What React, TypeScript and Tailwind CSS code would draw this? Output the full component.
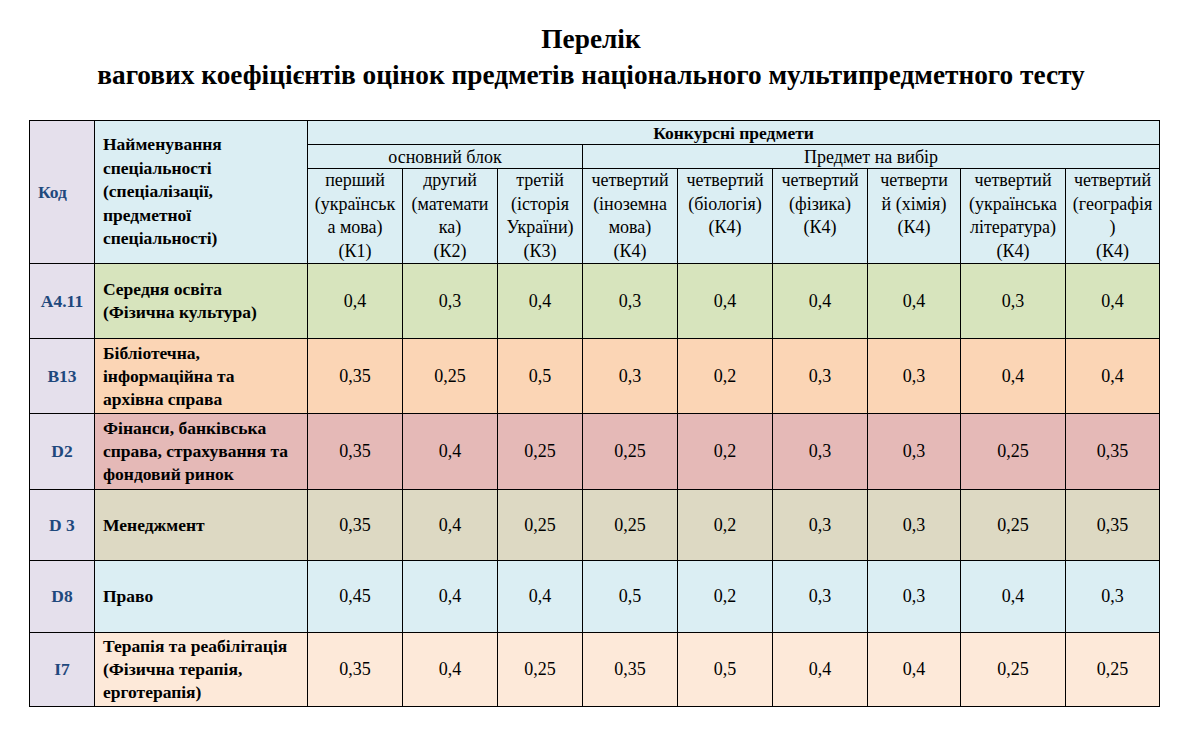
import React from "react";

type Row = {
  code: string;
  name: string[];
  values: string[];
  bg: string;
  h: string;
};

const rows: Row[] = [
  {
    code: "A4.11",
    name: ["Середня освіта", "(Фізична культура)"],
    values: ["0,4", "0,3", "0,4", "0,3", "0,4", "0,4", "0,4", "0,3", "0,4"],
    bg: "bg-[#d7e4bd]",
    h: "h-[75px]",
  },
  {
    code: "B13",
    name: ["Бібліотечна,", "інформаційна та", "архівна справа"],
    values: ["0,35", "0,25", "0,5", "0,3", "0,2", "0,3", "0,3", "0,4", "0,4"],
    bg: "bg-[#fbd5b5]",
    h: "h-[75px]",
  },
  {
    code: "D2",
    name: ["Фінанси, банківська", "справа, страхування та", "фондовий ринок"],
    values: ["0,35", "0,4", "0,25", "0,25", "0,2", "0,3", "0,3", "0,25", "0,35"],
    bg: "bg-[#e5b9b7]",
    h: "h-[76px]",
  },
  {
    code: "D 3",
    name: ["Менеджмент"],
    values: ["0,35", "0,4", "0,25", "0,25", "0,2", "0,3", "0,3", "0,25", "0,35"],
    bg: "bg-[#ddd9c3]",
    h: "h-[71px]",
  },
  {
    code: "D8",
    name: ["Право"],
    values: ["0,45", "0,4", "0,4", "0,5", "0,2", "0,3", "0,3", "0,4", "0,3"],
    bg: "bg-[#dbeef3]",
    h: "h-[72px]",
  },
  {
    code: "I7",
    name: ["Терапія та реабілітація", "(Фізична терапія,", "ерготерапія)"],
    values: ["0,35", "0,4", "0,25", "0,35", "0,5", "0,4", "0,4", "0,25", "0,25"],
    bg: "bg-[#fde9d9]",
    h: "h-[74px]",
  },
];

const subjects: string[][] = [
  ["перший", "(українськ", "а мова)", "(К1)"],
  ["другий", "(математи", "ка)", "(К2)"],
  ["третій", "(історія", "України)", "(К3)"],
  ["четвертий", "(іноземна", "мова)", "(К4)"],
  ["четвертий", "(біологія)", "(К4)"],
  ["четвертий", "(фізика)", "(К4)"],
  ["четверти", "й (хімія)", "(К4)"],
  ["четвертий", "(українська", "література)", "(К4)"],
  ["четвертий", "(географія", ")", "(К4)"],
];

const colWidths = [
  "w-[65px]",
  "w-[213px]",
  "w-[95px]",
  "w-[95px]",
  "w-[85px]",
  "w-[95px]",
  "w-[95px]",
  "w-[95px]",
  "w-[93px]",
  "w-[105px]",
  "w-[94px]",
];

const App: React.FC = () => {
  return (
    <div className="h-[739px] w-full bg-white font-['Liberation_Serif',serif] text-black">
      <div className="pt-[21px] text-center text-[27.3px] font-bold leading-[36px]">
        <p>Перелік</p>
        <p>вагових коефіцієнтів оцінок предметів національного мультипредметного тесту</p>
      </div>

      <table className="ml-[29px] mt-[27px] w-[1130px] table-fixed border-collapse border border-black text-[18px] leading-[23px]">
        <colgroup>
          {colWidths.map((w, i) => (
            <col key={i} className={w} />
          ))}
        </colgroup>
        <thead>
          <tr className="h-[24px]">
            <th
              rowSpan={3}
              className="border border-black bg-[#e5e0ec] pl-[8px] text-left text-[17.5px] font-bold text-[#1f497d]"
            >
              Код
            </th>
            <th
              rowSpan={3}
              className="border border-black bg-[#dbeef3] px-[8px] text-left text-[17.5px] font-bold leading-[23.5px]"
            >
              {["Найменування", "спеціальності", "(спеціалізації,", "предметної", "спеціальності)"].map((l, j) => (
                <div key={j} className="whitespace-nowrap">
                  {l}
                </div>
              ))}
            </th>
            <th colSpan={9} className="border border-black bg-[#dbeef3] text-[17.5px] font-bold leading-[22px]">
              Конкурсні предмети
            </th>
          </tr>
          <tr className="h-[24px]">
            <th colSpan={3} className="border border-black bg-[#dbeef3] font-normal leading-[22px]">
              основний блок
            </th>
            <th colSpan={6} className="border border-black bg-[#dbeef3] font-normal leading-[22px]">
              Предмет на вибір
            </th>
          </tr>
          <tr className="h-[94px]">
            {subjects.map((lines, i) => (
              <th
                key={i}
                className="border border-black bg-[#dbeef3] px-0 py-0 align-top font-normal leading-[23.5px]"
              >
                {lines.map((l, j) => (
                  <div key={j} className="whitespace-nowrap">
                    {l}
                  </div>
                ))}
              </th>
            ))}
          </tr>
        </thead>
        <tbody>
          {rows.map((r) => (
            <tr key={r.code} className={`${r.h} ${r.bg}`}>
              <td className="border border-black bg-[#e5e0ec] text-center text-[17.5px] font-bold text-[#1f497d]">
                {r.code}
              </td>
              <td className="border border-black px-[8px] text-[17.5px] font-bold">
                {r.name.map((l, j) => (
                  <div key={j} className="whitespace-nowrap">
                    {l}
                  </div>
                ))}
              </td>
              {r.values.map((v, j) => (
                <td key={j} className="border border-black text-center">
                  {v}
                </td>
              ))}
            </tr>
          ))}
        </tbody>
      </table>
    </div>
  );
};

export default App;
